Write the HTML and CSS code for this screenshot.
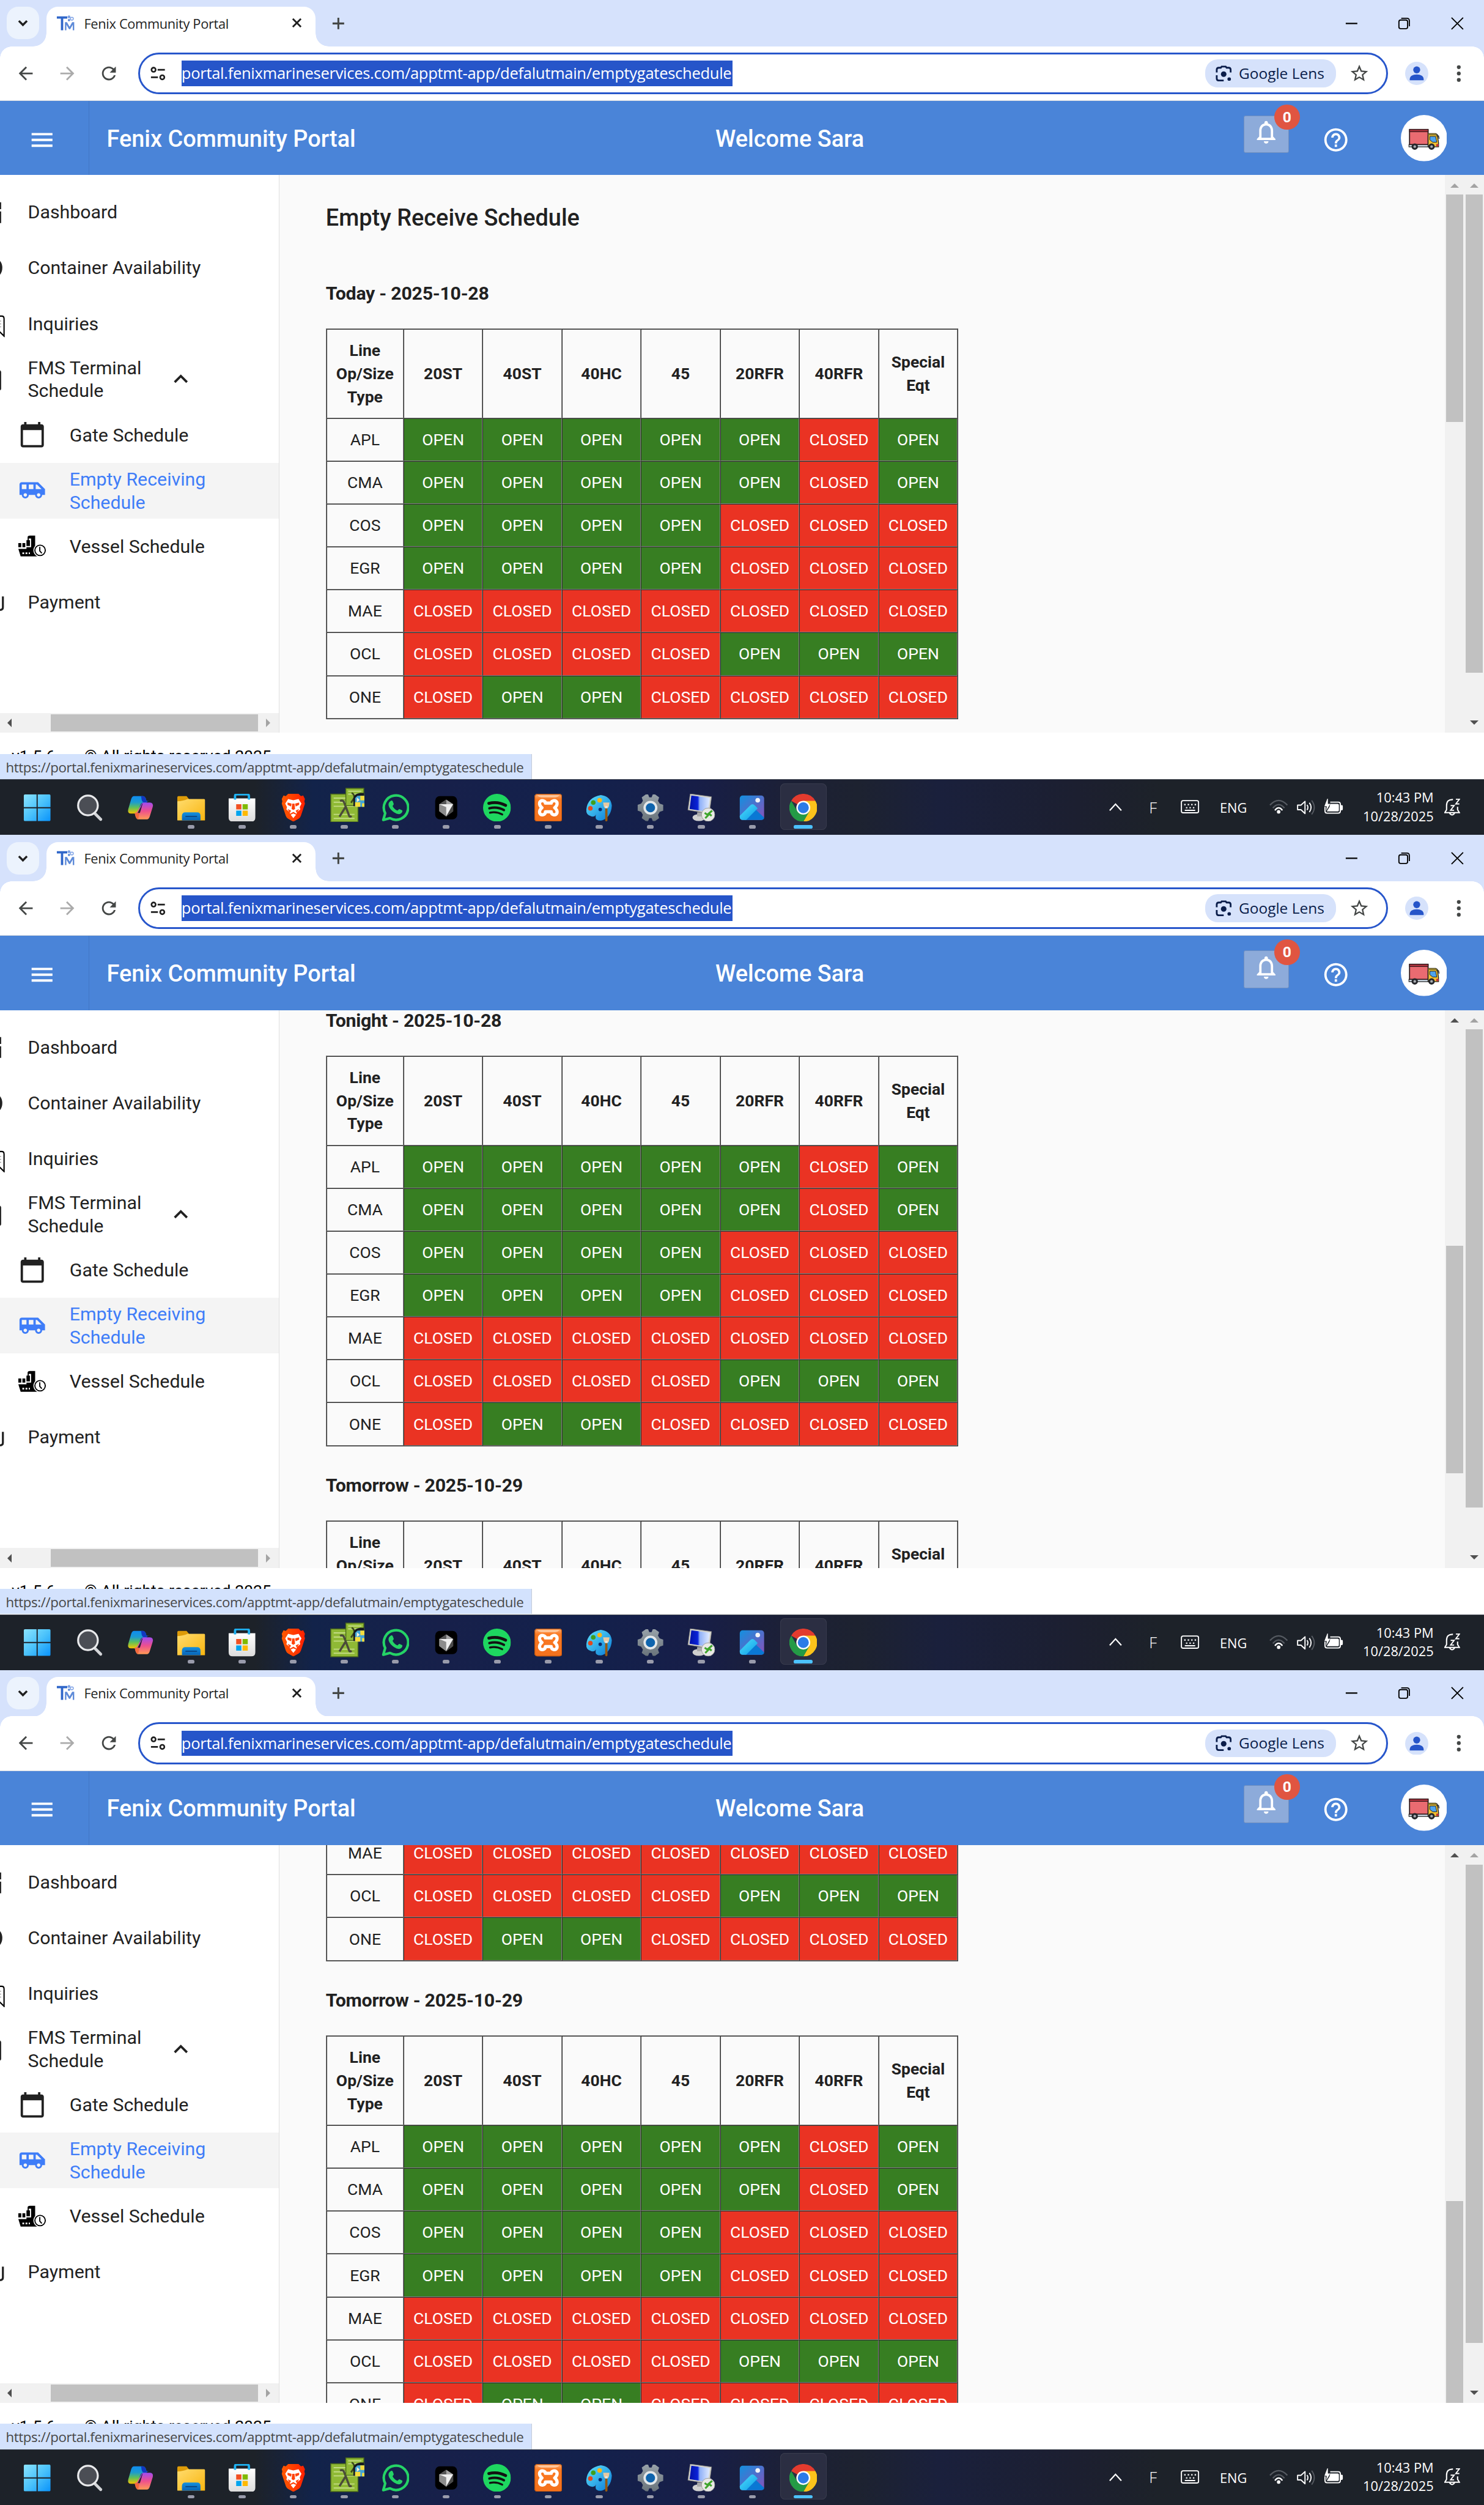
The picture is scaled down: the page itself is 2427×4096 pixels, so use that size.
FILE: index.html
```html
<!DOCTYPE html>
<html lang="en">
<head>
<meta charset="utf-8">
<title>Fenix Community Portal</title>
<link rel="stylesheet" href="styles.css">
</head>
<body>
<svg class="sprite" aria-hidden="true">
  <defs>
    <linearGradient id="g-win" x1="0" y1="0" x2="1" y2="1"><stop offset="0" stop-color="#8be4ff"/><stop offset=".5" stop-color="#4cc3fb"/><stop offset="1" stop-color="#0a93fb"/></linearGradient>
    <linearGradient id="g-cop1" x1="0" y1="0" x2="0" y2="1"><stop offset="0" stop-color="#0f8cf0"/><stop offset=".35" stop-color="#1c9bd0"/><stop offset=".65" stop-color="#5fc05a"/><stop offset="1" stop-color="#f5c400"/></linearGradient>
    <linearGradient id="g-cop2" x1="0" y1="0" x2="0" y2="1"><stop offset="0" stop-color="#a04bf0"/><stop offset=".5" stop-color="#ee4f8e"/><stop offset="1" stop-color="#ff9a55"/></linearGradient>
    <linearGradient id="g-fold" x1="0" y1="0" x2="1" y2="1"><stop offset="0" stop-color="#ffdc6e"/><stop offset="1" stop-color="#f9b50f"/></linearGradient>
    <linearGradient id="g-blue" x1="0" y1="0" x2="0" y2="1"><stop offset="0" stop-color="#1490df"/><stop offset="1" stop-color="#0863b5"/></linearGradient>
    <linearGradient id="g-store" x1="0" y1="0" x2="0" y2="1"><stop offset="0" stop-color="#ffffff"/><stop offset="1" stop-color="#dcdcdc"/></linearGradient>
    <linearGradient id="g-brave" x1="0" y1="0" x2="1" y2="0"><stop offset="0" stop-color="#ff5a00"/><stop offset="1" stop-color="#ff2000"/></linearGradient>
    <linearGradient id="g-paint" x1="0" y1="0" x2="1" y2="1"><stop offset="0" stop-color="#5fe3fa"/><stop offset="1" stop-color="#0a7bd8"/></linearGradient>
    <linearGradient id="g-gear" x1="0" y1="0" x2="0" y2="1"><stop offset="0" stop-color="#97a1a8"/><stop offset="1" stop-color="#6a747b"/></linearGradient>
    <linearGradient id="g-photo" x1="0" y1="0" x2="1" y2="1"><stop offset="0" stop-color="#1290e0"/><stop offset="1" stop-color="#8a50b8"/></linearGradient>
    <linearGradient id="g-mount" x1="0" y1="0" x2="1" y2="1"><stop offset="0" stop-color="#4fe0fb"/><stop offset="1" stop-color="#0c9be8"/></linearGradient>
    <linearGradient id="g-screen" x1="0" y1="0" x2="1" y2="0"><stop offset="0" stop-color="#0212a8"/><stop offset=".4" stop-color="#0a22d8"/><stop offset=".5" stop-color="#8fb0f8"/><stop offset="1" stop-color="#e2ecff"/></linearGradient>
    <linearGradient id="g-xampp" x1="0" y1="0" x2="0" y2="1"><stop offset="0" stop-color="#ffb27a"/><stop offset=".14" stop-color="#fb8a3c"/><stop offset=".2" stop-color="#fb7a24"/><stop offset="1" stop-color="#f4711c"/></linearGradient>
  </defs>
  <symbol id="i-chevdown" viewBox="0 0 20 20"><path d="M3 6.500l7 7 7-7" fill="none" stroke="#1f1f1f" stroke-width="3.500"/></symbol>
  <symbol id="i-fav" viewBox="0 0 32 32"><path d="M1 4h18v4h-7v20H8V8H1z" fill="#2f66c9"/><path d="M15 28V14h3.500l4.500 8 4.500-8H31v14h-2.500V18.500L24 26h-2l-4.500-7.500V28z" fill="#5d8ad8"/><circle cx="22" cy="5" r="2.500" fill="#7fa3e6"/><circle cx="27" cy="8" r="2.500" fill="none" stroke="#7fa3e6" stroke-width="1.500"/><circle cx="22" cy="10.500" r="2" fill="#5d8ad8"/></symbol>
  <symbol id="i-x" viewBox="0 0 20 20"><path d="M3 3l14 14M17 3L3 17" stroke="#1f1f1f" stroke-width="3" fill="none"/></symbol>
  <symbol id="i-plus" viewBox="0 0 24 24"><path d="M12 2v20M2 12h20" stroke="#444746" stroke-width="3.200"/></symbol>
  <symbol id="i-min" viewBox="0 0 24 24"><path d="M2 12h20" stroke="#000" stroke-width="2.200"/></symbol>
  <symbol id="i-restore" viewBox="0 0 24 24"><rect x="3" y="6" width="15" height="15" rx="3" fill="none" stroke="#000" stroke-width="2"/><path d="M7 3h9.500q4.500 0 4.500 4.500V17" fill="none" stroke="#000" stroke-width="2"/></symbol>
  <symbol id="i-close" viewBox="0 0 24 24"><path d="M2 2l20 20M22 2L2 22" stroke="#000" stroke-width="2" fill="none"/></symbol>
  <symbol id="i-back" viewBox="0 0 24 24"><path d="M20 11H7.830l5.590-5.590L12 4l-8 8 8 8 1.410-1.410L7.830 13H20v-2z"/></symbol>
  <symbol id="i-reload" viewBox="0 0 24 24"><path d="M17.650 6.350C16.200 4.900 14.210 4 12 4c-4.420 0-7.990 3.580-7.990 8s3.570 8 7.990 8c3.730 0 6.840-2.550 7.730-6h-2.080c-.82 2.330-3.040 4-5.650 4-3.310 0-6-2.690-6-6s2.690-6 6-6c1.660 0 3.140.69 4.220 1.780L13 11h7V4l-2.350 2.350z"/></symbol>
  <symbol id="i-tune" viewBox="0 0 28 28"><g fill="none" stroke="#1f1f1f" stroke-width="2.800"><circle cx="6.500" cy="7.500" r="3.600"/><path d="M13.500 7.500H26M2 20.500h12"/><circle cx="21.500" cy="20.500" r="3.600"/></g></symbol>
  <symbol id="i-lens" viewBox="0 0 28 28"><g fill="none" stroke="#0a1d4a" stroke-width="3"><path d="M2 12V7.500Q2 4 5.500 4H9l1.500-2h7L19 4h3.500Q26 4 26 7.500V12M2 17v5.500Q2 26 5.500 26H14"/></g><circle cx="14" cy="15" r="4.800" fill="#0a1d4a"/><circle cx="23.500" cy="23.500" r="3" fill="#0a1d4a"/></symbol>
  <symbol id="i-star" viewBox="0 0 24 24"><path d="M22 9.240l-7.190-.62L12 2 9.190 8.630 2 9.240l5.460 4.730L5.820 21 12 17.270 18.180 21l-1.630-7.030L22 9.240zM12 15.400l-3.760 2.270 1-4.280-3.320-2.880 4.380-.38L12 6.100l1.710 4.040 4.380.38-3.320 2.880 1 4.280L12 15.400z"/></symbol>
  <symbol id="i-person" viewBox="0 0 40 40"><circle cx="20" cy="20" r="20" fill="#d6e2fb"/><circle cx="20" cy="14" r="6" fill="#2655c9"/><path d="M8 32v-2c0-5 5-8 12-8s12 3 12 8v2z" fill="#2655c9"/></symbol>
  <symbol id="i-dots" viewBox="0 0 8 30"><circle cx="4" cy="4" r="3.300"/><circle cx="4" cy="15" r="3.300"/><circle cx="4" cy="26" r="3.300"/></symbol>
  <symbol id="i-menu" viewBox="0 0 24 24"><path d="M3 18h18v-2H3v2zm0-5h18v-2H3v2zm0-7v2h18V6H3z"/></symbol>
  <symbol id="i-bell" viewBox="0 0 24 24"><path d="M12 22c1.100 0 2-.9 2-2h-4c0 1.100.9 2 2 2zm6-6v-5c0-3.070-1.630-5.640-4.500-6.320V4c0-.83-.67-1.500-1.500-1.500s-1.500.67-1.500 1.500v.68C7.640 5.360 6 7.920 6 11v5l-2 2v1h16v-1l-2-2zm-2 1H8v-6c0-2.480 1.510-4.500 4-4.500s4 2.020 4 4.500v6z"/></symbol>
  <symbol id="i-help" viewBox="0 0 24 24"><path d="M11 18h2v-2h-2v2zm1-16C6.480 2 2 6.480 2 12s4.480 10 10 10 10-4.480 10-10S17.520 2 12 2zm0 18c-4.410 0-8-3.590-8-8s3.590-8 8-8 8 3.590 8 8-3.590 8-8 8zm0-14c-2.210 0-4 1.790-4 4h2c0-1.100.9-2 2-2s2 .9 2 2c0 2-3 1.750-3 5h2c0-2.250 3-2.500 3-5 0-2.210-1.790-4-4-4z"/></symbol>
  <symbol id="i-truck" viewBox="0 0 80 80"><circle cx="40" cy="40" r="40" fill="#fff"/><path d="M14 51h34v4H14z" fill="#d5e2ee" stroke="#222" stroke-width="1.200"/><rect x="15" y="25" width="32" height="26" fill="#ea6b71" stroke="#2a1618" stroke-width="1.800"/><path d="M15 25h32v4H15z" fill="#a8323c" stroke="#2a1618" stroke-width="1.200"/><path d="M47 32h13l3 2 2 14v7H47z" fill="#f1c232" stroke="#222" stroke-width="1.500"/><path d="M47 32h13l2 3H47z" fill="#8b7a2c"/><path d="M50 37h10l2 10h-7l-5-4z" fill="#4da3ee" stroke="#222" stroke-width="1"/><path d="M61 36h4l1 5" fill="none" stroke="#222" stroke-width="1.500"/><path d="M61 50h4v4h-4z" fill="#c8323a"/><circle cx="24" cy="54.500" r="5.500" fill="#25272b"/><circle cx="24" cy="54.500" r="2.300" fill="#a9adb3"/><circle cx="53" cy="54.500" r="5.500" fill="#25272b"/><circle cx="53" cy="54.500" r="2.300" fill="#a9adb3"/></symbol>
  <symbol id="i-dash" viewBox="0 0 12 48"><path d="M0 7h2v12H0zM0 23h2v20H0z" fill="#212121"/></symbol>
  <symbol id="i-cont" viewBox="0 0 12 48"><path d="M0 12Q4 17 4 24T0 36z" fill="#212121"/></symbol>
  <symbol id="i-inq" viewBox="0 0 12 48"><path d="M-4 11.500H3Q7 11.500 7 16V46L-2 37" fill="none" stroke="#000" stroke-width="2.200"/><path d="M0 20h2M0 25h2M0 30h2" stroke="#777" stroke-width="1"/></symbol>
  <symbol id="i-fms" viewBox="0 0 12 48"><path d="M0 9Q2 10 2 12V41Q2 43 0 43.500z" fill="#212121"/></symbol>
  <symbol id="i-pay" viewBox="0 0 12 48"><path d="M5 15v19q0 4-5 4.500" fill="none" stroke="#212121" stroke-width="3.400"/></symbol>
  <symbol id="i-up" viewBox="0 0 24 24"><path d="M12 8l-6 6 1.410 1.410L12 10.830l4.590 4.580L18 14z"/></symbol>
  <symbol id="i-cal" viewBox="0 0 24 24"><path d="M20 3h-1V1h-2v2H7V1H5v2H4c-1.100 0-2 .9-2 2v16c0 1.100.9 2 2 2h16c1.100 0 2-.9 2-2V5c0-1.100-.9-2-2-2zm0 18H4V8h16v13z"/></symbol>
  <symbol id="i-van" viewBox="0 0 24 24"><path d="M17 5H3c-1.100 0-2 .89-2 2v9h2c0 1.650 1.340 3 3 3s3-1.350 3-3h5.500c0 1.650 1.340 3 3 3s3-1.350 3-3H23v-5l-6-6zM3 11V7h4v4H3zm3 6.500c-.83 0-1.500-.67-1.500-1.500s.67-1.500 1.500-1.500 1.500.67 1.500 1.500-.67 1.500-1.500 1.500zm7-6.500H9V7h4v4zm4.500 6.500c-.83 0-1.500-.67-1.500-1.500s.67-1.500 1.500-1.500 1.500.67 1.500 1.500-.67 1.500-1.500 1.500zM15 11V7h1l4 4h-5z"/></symbol>
  <symbol id="i-ship" viewBox="0 0 48 48"><path d="M0 19h5v7H0zM7 19h5v7H7zM14 14h6v10h-6zM16 9q0-3 4-3h9v20h3l1 3v13H4L0 29h14v-3h8V11h-4v3h-2z" fill="#000"/><path d="M7 35h3v3H7zM12.500 35h3v3h-3zM18 35h2v3h-2z" fill="#fff"/><circle cx="37.500" cy="31.500" r="11.500" fill="#fff"/><circle cx="37.500" cy="31.500" r="9" fill="#fff" stroke="#000" stroke-width="2"/><path d="M37 25.500v7l3.500 4" fill="none" stroke="#000" stroke-width="2"/></symbol>

  <symbol id="t-start" viewBox="0 0 48 48"><g fill="url(#g-win)"><path d="M1 3q0-2 2-2h20v22H1zM25 1h20q2 0 2 2v20H25zM1 25h22v22H3q-2 0-2-2zM25 25h22v20q0 2-2 2H25z"/></g></symbol>
  <symbol id="t-search" viewBox="0 0 48 48"><path d="M34 34l10 10" stroke="#d3d5d8" stroke-width="5" stroke-linecap="round"/><circle cx="22" cy="20" r="17" fill="#4b4e55" stroke="#e9eaec" stroke-width="3.400"/></symbol>
  <symbol id="t-copilot" viewBox="0 0 48 48"><path d="M17 32h8l5 0 4-16q1-4 6-4h-9l-3 1z" fill="#1a4fd0"/><path d="M13 4h15q4 0 5.500 5l1.500 6h-6q-4 0-5.500 5L20 30q-1.500 4-6 4H7q-6 0-4-8L8 9q1.500-5 5-5z" fill="url(#g-cop1)"/><path d="M25 4h3q4 0 5.500 5l1.500 6h-4q-4 0-5-5z" fill="#1238c0"/><path d="M35 44H20q-3 0-4.500-5L14 33q4 0 6-5l4-7q2-6 6-6h10q7 0 5 8l-5 16q-1.500 5-5 5z" fill="url(#g-cop2)"/><path d="M14 33h8l-2 11q-3-1-4.500-5z" fill="#f26a3c"/><path d="M25 22q1-4 3-6l-5 17h-4z" fill="#1b2130"/></symbol>
  <symbol id="t-folder" viewBox="0 0 48 48"><path d="M0 6q0-2 2-2h14l4 5v6H0z" fill="#dd9b08"/><path d="M0 13q8 0 18-4h28q2 0 2 2v34q0 1-1 1H1q-1 0-1-1z" fill="url(#g-fold)"/><path d="M8 46V38q0-6 6-6h20q6 0 6 6v8z" fill="url(#g-blue)"/><path d="M14 39h20" stroke="#0a4a8a" stroke-width="2"/></symbol>
  <symbol id="t-store" viewBox="0 0 48 48"><path d="M1 8h46v33q0 7-7 7H8q-7 0-7-7z" fill="url(#g-store)"/><path d="M12 10V4q0-3 3-3h18q3 0 3 3v6" fill="none" stroke="#1fb0f0" stroke-width="4"/><path d="M14 18h9v9h-9z" fill="#f25022"/><path d="M25 18h9v9h-9z" fill="#7fba00"/><path d="M14 29h9v9h-9z" fill="#00a4ef"/><path d="M25 29h9v9h-9z" fill="#ffb900"/></symbol>
  <symbol id="t-brave" viewBox="0 0 48 48"><path d="M15 0h18l4 4 4-1 3 6-1 4 1 4-7 21q-1 3-4 5l-9 5-9-5q-3-2-4-5L4 17l1-4-1-4 3-6 4 1z" fill="url(#g-brave)"/><path d="M15 9l9 2 9-2 5 8-3 6 1 4-5 4-3 6-4 5-4-5-3-6-5-4 1-4-3-6z" fill="#fff"/><path d="M14 15l7 2-1 5-6-3zM34 15l-7 2 1 5 6-3zM22 17h4l1 9-3 2-3-2zM14 26l6 3-2 4zM34 26l-6 3 2 4zM19 34l5-3 5 3v2l-5-2-5 2z" fill="#ff4209"/></symbol>
  <symbol id="t-npp" viewBox="0 0 60 60"><path d="M1 11h47v48H1z" fill="#8fb935" stroke="#4c6a1c" stroke-width="1.500"/><path d="M6 18h36M6 25h36M6 32h36M6 46h36M6 53h36" stroke="#c3dc84" stroke-width="2"/><path d="M17 23q6-3 8 5l8 21q1 2 4 0M26 34L16 50" fill="none" stroke="#4a4a3a" stroke-width="3.600"/><path d="M27 1h31v30H27z" fill="#8fb935" stroke="#4c6a1c" stroke-width="1.500"/><path d="M31 6h23M31 11h23" stroke="#c3dc84" stroke-width="2"/><path d="M37 9q5 2 5 10M36 26l6-9" fill="none" stroke="#3d4a1e" stroke-width="3"/><path d="M40 32V18q2-8 12-9h6v5h-8q-6 2-6 10v8z" fill="#161b20"/><path d="M43 18l4-4h12v19H43z" fill="#42a5d8"/><path d="M52 14h7v8h-7zM43 25h9v8h-9zM55 27h4v6h-4z" fill="#f5dc3c"/><path d="M46 17l5 4-5 4z" fill="#f6f2d8"/></symbol>
  <symbol id="t-wa" viewBox="0 0 48 48"><path d="M3 45l3.300-11.500A21 21 0 1 1 14.500 42z" fill="none" stroke="#25d366" stroke-width="4.400" stroke-linejoin="round"/><path d="M16 12c2-1 3 0 3.500 1.500l1.500 4c.4 1-1.500 3-2 3.500 2 4 4.500 6 8.500 8 1-1 2.500-3 3.500-2.700l4.500 2.200c1.500 1-.5 6-5 6.500-6 .5-18-8-18.500-16.500C12 15 14 13 16 12z" fill="#25d366"/></symbol>
  <symbol id="t-cursor" viewBox="0 0 48 48"><rect x="5" y="4" width="38" height="40" rx="8" fill="#000"/><path d="M24 10l12 8v12l-12 9-12-9V18z" fill="#777"/><path d="M24 10l12 8-12 5z" fill="#a5a5a5"/><path d="M12 18l12-8v13z" fill="#555"/><path d="M12 18h24L24 39z" fill="#efefef"/><path d="M12 18l12 5v16l-12-9z" fill="#8d8d8d"/><path d="M36 18v12l-12 9z" fill="#4b4b4b"/></symbol>
  <symbol id="t-spot" viewBox="0 0 48 48"><circle cx="24" cy="24" r="24" fill="#1ed760"/><g fill="none" stroke="#121212" stroke-linecap="round"><path d="M10 16.500q15-4 29 3.500" stroke-width="5"/><path d="M11 25q13-3.500 25 3" stroke-width="4.200"/><path d="M12 32.500q11-2.500 21 3" stroke-width="3.500"/></g></symbol>
  <symbol id="t-xampp" viewBox="0 0 48 48"><rect width="48" height="48" rx="5" fill="url(#g-xampp)"/><rect x=".7" y=".7" width="46.600" height="46.600" rx="4.500" fill="none" stroke="#c2570e" stroke-width="1.400"/><path d="M5 2.500h38q-2 3.500-7 3.500H12Q7 6 5 2.500z" fill="#ffc79c"/><path d="M13 24Q8 20 9 15q2-4 6-3 4 1 4 4h10q0-3 4-4 4-1 6 3 1 5-4 9 5 4 4 9-2 4-6 3-4-1-4-5H19q0 4-4 5-4 1-6-3-1-5 4-9z" fill="none" stroke="#fff" stroke-width="5.500" stroke-linejoin="round"/></symbol>
  <symbol id="t-paint" viewBox="0 0 48 48"><path d="M27 2q17 2 19 18-1 20-17 26-11 1-11-6 0-3 1-5-2 5-8 4Q1 37 2 27 4 6 27 2z" fill="url(#g-paint)"/><circle cx="9" cy="25" r="4" fill="#e2491f"/><circle cx="14" cy="15" r="4" fill="#3f9f1c"/><circle cx="25" cy="11" r="4" fill="#fdb515"/><circle cx="26" cy="27" r="3" fill="#0d2a6b"/><path d="M31 15h11l-1 6q-1 4-4.500 4T32 21z" fill="#e9c9a0"/><path d="M34.500 21h4v4h-4z" fill="#e6e6e6"/><path d="M34.500 25h4v21q-2 4-4 0z" fill="#96590f"/></symbol>
  <symbol id="t-gear" viewBox="0 0 48 48"><path d="M16 1h4l2 5h4l2-5h4l7 5-2 6 3 5 6 2v10l-6 2-3 5 2 6-7 5h-4l-2-5h-4l-2 5h-4l-7-5 2-6-3-5-6-2V19l6-2 3-5-2-6z" fill="url(#g-gear)"/><circle cx="24" cy="24" r="10" fill="#0f64ad" stroke="#e4e8ea" stroke-width="4"/></symbol>
  <symbol id="t-rdp" viewBox="0 0 48 48"><ellipse cx="20" cy="41" rx="11" ry="6" fill="#cfcfcf"/><path d="M17 32h8v7h-8z" fill="#aaa"/><path d="M5 0l37 5-4 29L1 28z" fill="#d4d4cc" stroke="#777" stroke-width=".8"/><path d="M7 3l32 4-3.500 24L4 26z" fill="url(#g-screen)"/><circle cx="36" cy="36" r="11.500" fill="#e9e9e6" stroke="#999" stroke-width="1"/><path d="M30 33l6 4-5 5M43 29l-6 5 5 4" fill="none" stroke="#3fa52c" stroke-width="3.200"/></symbol>
  <symbol id="t-photo" viewBox="0 0 48 48"><rect x="3" y="3" width="42" height="42" rx="5" fill="url(#g-photo)"/><path d="M12 45l18-18 15 14v0q0 4-4 4z" fill="#0a78d4"/><path d="M3 38l18-18q4-4 8 0l5 5-20 20H8q-5 0-5-5z" fill="url(#g-mount)"/><circle cx="34" cy="11" r="4" fill="#f2f4f8"/></symbol>
  <symbol id="t-chrome" viewBox="0 0 48 48"><path d="M24 24L3.200 12a24 24 0 0 1 41.600 0z" fill="#e33b2e"/><path d="M24 12h20.800A24 24 0 0 1 24 48l10.400-18z" fill="#fcc31b"/><path d="M3.200 12L13.600 30 24 36l10.400-6L24 48A24 24 0 0 1 3.200 12z" fill="#249a46"/><circle cx="24" cy="24" r="12" fill="#fff"/><circle cx="24" cy="24" r="9.500" fill="#2c7be8"/></symbol>

  <symbol id="y-up" viewBox="0 0 24 16"><path d="M2 14L12 3l10 11" fill="none" stroke="#fff" stroke-width="2.400"/></symbol>
  <symbol id="y-kbd" viewBox="0 0 32 24"><rect x="1.200" y="1.200" width="29.600" height="21" rx="3" fill="none" stroke="#fff" stroke-width="2"/><path d="M6 8h2.500M12 8h2.500M18 8h2.500M24 8h2.500M9 13.500h2.500M15 13.500h2.500M21 13.500h2.500M7 18h18" stroke="#fff" stroke-width="2.200"/></symbol>
  <symbol id="y-wifi" viewBox="0 0 32 26"><g fill="none" stroke-width="2.400"><path d="M1 10Q16-6 31 10M6 15Q16 3 26 15" stroke="#555a61"/><path d="M9.500 19Q16 10.500 22.500 19" stroke="#fff"/></g><circle cx="16" cy="21.500" r="3" fill="#fff"/></symbol>
  <symbol id="y-vol" viewBox="0 0 32 28"><path d="M1.200 10H7l7-6.500v21L7 18H1.200z" fill="none" stroke="#fff" stroke-width="2" stroke-linejoin="round"/><path d="M17.500 9.500q3 4.500 0 9M21.500 6q6 8 0 16" fill="none" stroke="#fff" stroke-width="2"/><path d="M25.500 2q9 12 0 24" fill="none" stroke="#555a61" stroke-width="2"/></symbol>
  <symbol id="y-bat" viewBox="0 0 32 28"><path d="M10 7h14q3.500 0 3.500 3.500v12Q27.500 26 24 26H4.500Q1 26 1 22.500V15" fill="none" stroke="#fff" stroke-width="2"/><path d="M10 10h13q2 0 2 2v9q0 2-2 2H4l5-8z" fill="#fff"/><path d="M28 12h2q2 0 2 2.500v4q0 2.500-2 2.500h-2z" fill="#fff"/><path d="M5 1L0 14h4L3 22 10 10H6V1z" fill="#fff"/></symbol>
  <symbol id="y-bell" viewBox="0 0 28 32"><path d="M15 2.500Q4 2 4 13v7l-3 5h25l-3-5v-5" fill="none" stroke="#fff" stroke-width="2.200"/><path d="M9 25.500q4.500 7 9 0" fill="none" stroke="#fff" stroke-width="2.200"/><path d="M11 13h6l-6 8h6M20 2h6l-6 8h6" fill="none" stroke="#fff" stroke-width="2"/></symbol>
</svg>

<main class="desktop"></main>

<template id="screen">
  <section class="screen">
    <div class="tabstrip">
      <span class="tabsearch"><svg width="20" height="20"><use href="#i-chevdown"/></svg></span>
      <div class="tab">
        <svg class="fav" width="32" height="32"><use href="#i-fav"/></svg>
        <span class="tab-title">Fenix Community Portal</span>
        <svg width="20" height="20"><use href="#i-x"/></svg>
      </div>
      <svg class="newtab" width="24" height="24"><use href="#i-plus"/></svg>
      <div class="wincontrols">
        <svg width="24" height="24"><use href="#i-min"/></svg>
        <svg width="24" height="24"><use href="#i-restore"/></svg>
        <svg width="24" height="24"><use href="#i-close"/></svg>
      </div>
    </div>
    <div class="toolbar">
      <svg class="back" width="36" height="36"><use href="#i-back"/></svg>
      <svg class="forward" width="36" height="36"><use href="#i-back"/></svg>
      <svg class="reload" width="36" height="36"><use href="#i-reload"/></svg>
      <div class="omnibox">
        <svg class="tune" width="28" height="28"><use href="#i-tune"/></svg>
        <span class="url">portal.fenixmarineservices.com/apptmt-app/defalutmain/emptygateschedule</span>
        <span class="lens"><svg width="28" height="28"><use href="#i-lens"/></svg><span>Google Lens</span></span>
        <svg class="star" width="36" height="36"><use href="#i-star"/></svg>
      </div>
      <svg class="person" width="40" height="40"><use href="#i-person"/></svg>
      <svg class="dots" width="8" height="30"><use href="#i-dots"/></svg>
    </div>
    <header class="appbar">
      <span class="menu"><svg width="48" height="48"><use href="#i-menu"/></svg></span>
      <span class="brand">Fenix Community Portal</span>
      <span class="welcome">Welcome Sara</span>
      <span class="alerts"><svg width="48" height="48"><use href="#i-bell"/></svg><b class="badge">0</b></span>
      <svg class="help" width="48" height="48"><use href="#i-help"/></svg>
      <svg class="avatar" width="80" height="80"><use href="#i-truck"/></svg>
    </header>
    <div class="body">
      <aside class="side">
        <nav class="nav">
          <a class="item"><svg width="12" height="48"><use href="#i-dash"/></svg><span>Dashboard</span></a>
          <a class="item"><svg width="12" height="48"><use href="#i-cont"/></svg><span>Container Availability</span></a>
          <a class="item"><svg width="12" height="48"><use href="#i-inq"/></svg><span>Inquiries</span></a>
          <a class="item"><svg width="12" height="48"><use href="#i-fms"/></svg><span class="group">FMS Terminal Schedule</span><svg width="48" height="48"><use href="#i-up"/></svg></a>
          <a class="item sub"><svg width="48" height="48"><use href="#i-cal"/></svg><span>Gate Schedule</span></a>
          <a class="item sub active"><svg width="48" height="48"><use href="#i-van"/></svg><span>Empty Receiving Schedule</span></a>
          <a class="item sub"><svg width="48" height="48"><use href="#i-ship"/></svg><span>Vessel Schedule</span></a>
          <a class="item"><svg width="12" height="48"><use href="#i-pay"/></svg><span>Payment</span></a>
        </nav>
        <div class="hscroll"><i class="arrow left"></i><i class="hthumb"></i><i class="arrow right"></i></div>
      </aside>
      <div class="content"><div class="scroller"></div></div>
      <div class="vscroll inner"><i class="arrow up"></i><i class="vthumb"></i></div>
      <div class="vscroll outer"><i class="arrow up"></i><i class="vthumb"></i><i class="arrow down"></i></div>
    </div>
    <footer class="foot">
      <div class="legal"><span>v1.5.6</span><span>© All rights reserved 2025</span></div>
      <div class="status">https://portal.fenixmarineservices.com/apptmt-app/defalutmain/emptygateschedule</div>
    </footer>
    <div class="taskbar">
      <div class="apps"></div>
      <div class="tray">
        <svg class="y-up" width="24" height="16"><use href="#y-up"/></svg>
        <span class="y-f">F</span>
        <svg class="y-kbd" width="32" height="24"><use href="#y-kbd"/></svg>
        <span class="y-eng">ENG</span>
        <svg class="y-wifi" width="32" height="26"><use href="#y-wifi"/></svg>
        <svg class="y-vol" width="32" height="28"><use href="#y-vol"/></svg>
        <svg class="y-bat" width="32" height="28"><use href="#y-bat"/></svg>
        <span class="clock">10:43 PM<br>10/28/2025</span>
        <svg class="y-bell" width="28" height="32"><use href="#y-bell"/></svg>
      </div>
    </div>
  </section>
</template>
<script src="app.js"></script>
</body>
</html>
```
FILE: app.js
```js
// Each status row: O = open, C = closed, one letter per equipment column.
const columns = ['Line Op/Size Type', '20ST', '40ST', '40HC', '45', '20RFR', '40RFR', 'Special Eqt'];
const lines = [
  ['APL', 'OOOOOCO'], ['CMA', 'OOOOOCO'], ['COS', 'OOOOCCC'], ['EGR', 'OOOOCCC'],
  ['MAE', 'CCCCCCC'], ['OCL', 'CCCCOOO'], ['ONE', 'COOCCCC']
];
const apps = [
  ['start', ''], ['search', ''], ['copilot', ''], ['folder', 'on'], ['store', 'on'], ['brave', 'on'],
  ['npp', 'on'], ['wa', 'on'], ['cursor', 'on'], ['spot', 'on'], ['xampp', 'on'], ['paint', 'on'],
  ['gear', 'on'], ['rdp', 'on'], ['photo', 'on'], ['chrome', 'on current']
];
// Per screen: the rows in view, and the scroll position of the schedule and its thumb.
const screens = [
  { title: true, tables: [{ day: 'Today - 2025-10-28' }], offset: 48, thumb: 34 },
  { tables: [{ day: 'Tonight - 2025-10-28' }, { day: 'Tomorrow - 2025-10-29', to: 0 }], offset: -2, thumb: 407, scrolled: true },
  { tables: [{ from: 4 }, { day: 'Tomorrow - 2025-10-29' }], offset: -24, thumb: 615, scrolled: true }
];

function schedule({ day, from = 0, to = lines.length }) {
  const head = day ? '<thead><tr>' + columns.map(c => `<th>${c}</th>`).join('') + '</tr></thead>' : '';
  const rows = lines.slice(from, to).map(([name, cells]) =>
    `<tr><td>${name}</td>` + [...cells].map(s =>
      s === 'O' ? '<td class="open">OPEN</td>' : '<td class="closed">CLOSED</td>').join('') + '</tr>').join('');
  const cols = '<colgroup><col class="first"><col span="7"></colgroup>';
  return (day ? `<h3 class="day">${day}</h3>` : '') + `<table class="grid">${cols}${head}<tbody>${rows}</tbody></table>`;
}

const desktop = document.querySelector('.desktop');
const template = document.getElementById('screen');
for (const s of screens) {
  const node = template.content.cloneNode(true);
  const scroller = node.querySelector('.scroller');
  scroller.style.marginTop = s.offset + 'px';
  scroller.innerHTML = (s.title ? '<h2 class="page-title">Empty Receive Schedule</h2>' : '') + s.tables.map(schedule).join('');
  const bar = node.querySelector('.vscroll.inner');
  bar.querySelector('.vthumb').style.marginTop = (s.thumb - 34) + 'px';
  if (s.scrolled) bar.classList.add('scrolled');
  node.querySelector('.apps').innerHTML = apps.map(([id, state]) =>
    `<span class="app ${id} ${state}"><svg width="48" height="48"><use href="#t-${id}"/></svg></span>`).join('');
  desktop.append(node);
}
```
FILE: styles.css
```css
* { box-sizing: border-box; }
html, body { margin: 0; padding: 0; }
body { width: 2427px; height: 4096px; overflow: hidden; background: #1d2229; font-family: Roboto, "Liberation Sans", sans-serif; color: #212121; }
svg { display: block; flex: none; }
.sprite { position: absolute; width: 0; height: 0; }
.desktop { width: 2560px; zoom: 0.94812; }
.screen { height: 1440px; display: flex; flex-direction: column; overflow: hidden; background: #fff; }

/* browser chrome */
.tabstrip { height: 80px; background: #d6e2fc; display: flex; align-items: center; padding-left: 12px; flex: none; font-family: "Open Sans", "Noto Sans", sans-serif; }
.tabsearch { width: 56px; height: 56px; border-radius: 20px; background: #ecf3fd; display: flex; align-items: center; justify-content: center; }
.tab { position: relative; width: 464px; height: 68px; margin: 12px 0 0 12px; background: #fff; border-radius: 20px 20px 0 0; display: flex; align-items: center; padding: 0 22px 12px 17px; }
.tab::before, .tab::after { content: ""; position: absolute; bottom: 0; width: 22px; height: 22px; }
.tab::before { left: -22px; background: radial-gradient(circle at 0 0, transparent 21.500px, #fff 22px); }
.tab::after { right: -22px; background: radial-gradient(circle at 100% 0, transparent 21.500px, #fff 22px); }
.tab-title { margin-left: 16px; flex: 1; font-size: 23px; letter-spacing: -0.350px; color: #1f1f1f; white-space: nowrap; line-height: 32px; padding-top: 2px; }
.newtab { margin-left: 28px; }
.wincontrols { margin-left: auto; display: flex; gap: 67.500px; padding-right: 34px; }
.toolbar { height: 94px; flex: none; display: flex; align-items: center; border-bottom: 2px solid #dadce0; background: radial-gradient(circle at 20px 20px, #fff 19.500px, #d6e2fc 20px) 0 0 / 20px 20px no-repeat, radial-gradient(circle at 0 20px, #fff 19.500px, #d6e2fc 20px) 100% 0 / 20px 20px no-repeat, #fff; fill: #444746; font-family: "Open Sans", "Noto Sans", sans-serif; }
.back { margin-left: 26px; }
.forward { margin-left: 36px; transform: scaleX(-1); fill: #ababab; }
.reload { margin-left: 36px; }
.omnibox { margin-left: 32px; width: 2156px; height: 72px; border: 4px solid #2756cb; border-radius: 36px; display: flex; align-items: center; padding-left: 17px; }
.url { margin-left: 27px; height: 44px; width: 950px; background: #2655c9; color: #fff; font-size: 27px; letter-spacing: -0.330px; line-height: 43px; white-space: nowrap; }
.lens { margin-left: auto; width: 226px; height: 48px; border-radius: 22px; background: #d6e2fb; display: flex; align-items: center; padding-left: 18px; gap: 12px; font-size: 25.800px; color: #0a1d4a; white-space: nowrap; line-height: 44px; }
.lens span { padding-bottom: 1px; }
.star { margin: 0 28px 0 22px; }
.person { margin-left: 30px; }
.dots { margin-left: 48px; }

/* application bar */
.appbar { height: 128px; flex: none; background: #4a84d8; display: flex; align-items: center; color: #fff; fill: #fff; font-size: 40px; font-weight: 500; white-space: nowrap; }
.menu { width: 154px; height: 128px; border-right: 2px solid #4277c6; display: flex; align-items: center; padding: 6px 0 0 48px; }
.brand { width: 1049px; margin-left: 30px; }
.brand, .welcome { line-height: 48px; padding-top: 4px; }
.welcome { width: 912px; padding-left: 1px; }
.alerts { position: relative; width: 78px; height: 65px; margin: -13px 0 0 0; background: #8dabda; border: 1px solid #7090c0; border-radius: 3px; display: flex; align-items: center; justify-content: center; padding-bottom: 7px; }
.badge { position: absolute; left: 52px; top: -20px; width: 44px; height: 44px; border-radius: 50%; background: #e05541; font-size: 26px; font-weight: 700; line-height: 44px; text-align: center; }
.help { margin: 6px 0 0 57px; }
.avatar { margin-left: 88px; }

/* body */
.body { height: 962px; flex: none; display: flex; overflow: hidden; background: #fafafa; }
.side { width: 482px; border-right: 2px solid #e0e0e0; background: #fff; display: flex; flex-direction: column; fill: #212121; }
.nav { flex: 1; padding-top: 16px; }
.item { height: 96px; display: flex; align-items: center; font-size: 32px; line-height: 40px; }
.item > span { margin-left: 36px; padding-top: 1px; }
.item .group { width: 238px; margin-right: 2px; }
.item.sub { padding-left: 32px; }
.item.sub > span { margin-left: 40px; width: 290px; }
.item.active { background: #f4f4f4; color: #3f7df8; fill: #3f7df8; }
.hscroll { height: 34px; background: #f1f1f1; display: flex; align-items: center; }
.hthumb { width: 358px; height: 30px; background: #c1c1c1; margin-left: 67px; }
.arrow { display: block; width: 0; height: 0; }
.arrow.left { margin-left: 13px; border: 8px solid transparent; border-left-width: 0; border-right-color: #505050; }
.arrow.right { margin-left: 13px; border: 8px solid transparent; border-right-width: 0; border-left-color: #a3a3a3; }
.content { width: 2010px; overflow: hidden; padding-left: 80px; display: flow-root; }
.scroller { display: flow-root; }
.page-title { margin: 0 0 86px; padding-top: 2px; font-size: 40px; font-weight: 500; line-height: 48px; }
.day { margin: 0 0 40px; font-size: 32px; font-weight: 700; line-height: 40px; letter-spacing: -0.300px; }
.grid { width: 1091px; table-layout: fixed; border-collapse: separate; border-spacing: 0; border: 1px solid #808080; border-right-color: #2d2d2d; border-bottom-color: #2d2d2d; margin-bottom: 48px; font-size: 28px; line-height: 40px; text-align: center; }
.grid .first { width: 133px; }
.grid th, .grid td { height: 74px; padding: 0; border: 1px solid #808080; border-left-color: #2d2d2d; border-top-color: #2d2d2d; }
.grid th { height: 154px; padding: 0 12px; font-weight: 700; }
.grid .open { background: #377e22; color: #fff; }
.grid .closed { background: #ea3323; color: #fff; }
.vscroll { width: 34px; background: #f1f1f1; display: flex; flex-direction: column; align-items: center; }
.arrow.up { margin: 14px 0 12px; border: 8px solid transparent; border-top-width: 0; border-bottom-color: #a3a3a3; flex: none; }
.arrow.down { margin: auto 0 14px; border: 8px solid transparent; border-bottom-width: 0; border-top-color: #505050; }
.scrolled .arrow.up { border-bottom-color: #505050; }
.vthumb { width: 30px; height: 392px; background: #c1c1c1; flex: none; }
.outer .vthumb { height: 825px; }

/* page footer and link status */
.foot { position: relative; height: 80px; flex: none; background: #fff; overflow: hidden; padding: 24px 0 0 20px; }
.legal { display: flex; gap: 50px; font-size: 28px; line-height: 32px; color: #000; white-space: pre; }
.status { position: absolute; left: 0; top: 36px; width: 918px; height: 44px; background: #d3e2fd; border-right: 1px solid #c4cbd8; color: #474747; font-family: "Open Sans", "Noto Sans", sans-serif; font-size: 23.500px; letter-spacing: -0.420px; line-height: 46px; padding-left: 10px; white-space: nowrap; }

/* taskbar */
.taskbar { height: 96px; flex: none; border-top: 2px solid #40454f; display: flex; background: linear-gradient(90deg, #1d2229 0, #1d2229 440px, #12234a 540px, #17204a 760px, #13214c 1000px, #171e48 1200px, #1c2036 1360px, #1d2230 1480px, #1a203c 1620px, #1c1f30 1860px, #1d2229 2000px); }
.apps { display: flex; padding: 6px 0 0 22px; }
.app { width: 80px; height: 80px; margin: 0 4px; border-radius: 8px; display: flex; flex-direction: column; align-items: center; padding-top: 18px; }
.app.start svg { margin-left: -4px; }
.app.npp svg { width: 60px; height: 60px; margin: -11px 0 -1px 12px; }
.app.on::after { content: ""; width: 12px; height: 6px; margin-top: 6px; border-radius: 3px; background: #999bab; flex: none; }
.app.current { background: #2b2e42; box-shadow: inset 0 0 0 1px #393c4e; }
.app.current::after { width: 32px; background: #4cc2ff; }
.tray { margin-left: auto; display: flex; align-items: center; color: #fff; font-family: "Open Sans", "Noto Sans", sans-serif; font-size: 23px; line-height: 32px; padding-right: 41px; height: 94px; }
.y-f { margin-left: 46px; font-size: 27px; font-weight: 300; width: 15px; }
.y-kbd { margin-left: 40px; }
.y-eng { margin: 4px 0 0 35px; width: 48px; }
.y-wifi { margin-left: 37px; }
.y-vol { margin: 2px 0 0 16px; }
.y-bat { margin: -4px 0 0 16px; }
.clock { margin: 0; width: 156px; text-align: right; }
.y-bell { margin-left: 18px; }
```
